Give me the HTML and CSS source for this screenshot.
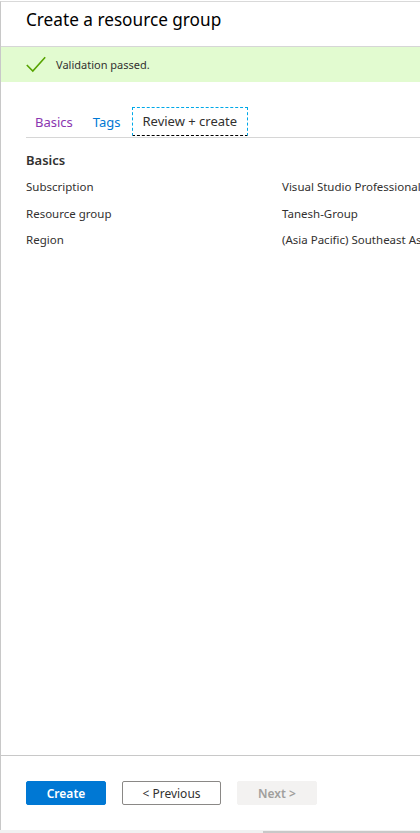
FILE: index.html
```html
<!DOCTYPE html>
<html lang="en">
<head>
<meta charset="utf-8">
<title>Create a resource group</title>
<link rel="stylesheet" href="styles.css">
</head>
<body>
<div class="blade">
  <header class="blade-header">
    <h1 class="title">Create a resource group</h1>
  </header>
  <div class="banner">
    <svg class="check" width="20" height="17" viewBox="0 0 20 17" aria-hidden="true">
      <path d="M0.8 9 L6.8 15 L19.2 1.2" fill="none" stroke="#57a300" stroke-width="1.6"/>
    </svg>
    <span class="banner-text">Validation passed.</span>
  </div>
  <main class="content">
    <nav class="tabs">
      <a class="tab tab-visited">Basics</a>
      <a class="tab tab-link">Tags</a>
      <a class="tab tab-active">Review + create</a>
    </nav>
    <section class="summary">
      <h2 class="section-title">Basics</h2>
      <div class="row"><span class="label">Subscription</span><span class="value">Visual Studio Professional</span></div>
      <div class="row"><span class="label">Resource group</span><span class="value">Tanesh-Group</span></div>
      <div class="row"><span class="label">Region</span><span class="value">(Asia Pacific) Southeast Asia</span></div>
    </section>
  </main>
  <footer class="footer">
    <button class="btn btn-primary">Create</button>
    <button class="btn btn-secondary">&lt; Previous</button>
    <button class="btn btn-disabled">Next &gt;</button>
  </footer>
</div>
<div class="bottom-strip"><div class="scroll-thumb"></div></div>
</body>
</html>
```

FILE: styles.css
```css
*, *::before, *::after {
  box-sizing: border-box;
}
html, body {
  margin: 0;
  padding: 0;
  background: #ffffff;
}
body {
  width: 420px;
  height: 833px;
  overflow: hidden;
  font-family: "Noto Sans", "Open Sans", sans-serif;
  color: #323130;
}
.blade {
  margin-top: 1px;
  height: 829px;
  border-top: 1px solid #d9d9d9;
  border-left: 1px solid #c8c8c8;
  display: flex;
  flex-direction: column;
  overflow: hidden;
  white-space: nowrap;
}
.blade-header {
  height: 45px;
  flex: none;
  border-bottom: 1px solid #d6d6d6;
  display: flex;
  align-items: center;
  padding-left: 25px;
}
.title {
  margin: 0;
  font-size: 17.2px;
  font-weight: 400;
  color: #000;
  line-height: 24px;
  margin-top: -9px;
}
.banner {
  height: 35px;
  flex: none;
  background: #e2fbd0;
  display: flex;
  align-items: center;
  padding-left: 25px;
}
.check {
  display: block;
  margin-right: 10px;
}
.banner-text {
  font-size: 11px;
  color: #323130;
}
.content {
  flex: 1;
  padding: 25px 0 0 25px;
}
.tabs {
  display: flex;
  align-items: flex-end;
  border-bottom: 1px solid #d6d6d6;
  height: 31px;
}
.tab {
  font-size: 13px;
  line-height: 20px;
  padding: 4px 9px 5px 9px;
  margin-right: 2px;
}
.tab-visited { color: #8a36b0; }
.tab-link { color: #0078d4; }
.tab-active {
  color: #323130;
  border: 1px dashed #00a8e8;
  border-bottom: 1px dashed #000;
  padding: 3px 10px 4px 10px;
  margin-bottom: 1px;
}
.section-title {
  margin: 13px 0 10px 0;
  font-size: 13px;
  font-weight: 600;
  color: #323130;
  line-height: 18px;
}
.row {
  display: flex;
  height: 26.5px;
  align-items: flex-start;
  font-size: 11.5px;
  line-height: 16px;
}
.row:first-of-type {
  margin-top: 1px;
}
.label {
  width: 256px;
  flex: none;
}
.value {
  flex: none;
}
.footer {
  height: 75px;
  flex: none;
  border-top: 1px solid #c8c8c8;
  display: flex;
  align-items: flex-start;
  padding: 25px 0 0 25px;
  gap: 16px;
}
.btn {
  height: 24px;
  font-family: inherit;
  font-size: 12px;
  border-radius: 2px;
  padding: 0;
  margin: 0;
}
.btn-primary {
  width: 80px;
  background: #0078d4;
  border: 1px solid #0078d4;
  color: #fff;
  font-weight: 600;
}
.btn-secondary {
  width: 99px;
  background: #fff;
  border: 1px solid #8a8886;
  color: #323130;
}
.btn-disabled {
  width: 80px;
  background: #f3f2f1;
  border: 1px solid #f3f2f1;
  color: #a19f9d;
  font-weight: 600;
}
.bottom-strip {
  height: 3px;
  background: #f1f1f1;
  position: relative;
}
.scroll-thumb {
  position: absolute;
  left: 263px;
  right: 0;
  top: 1px;
  height: 2px;
  background: #c8c8c8;
}
```
